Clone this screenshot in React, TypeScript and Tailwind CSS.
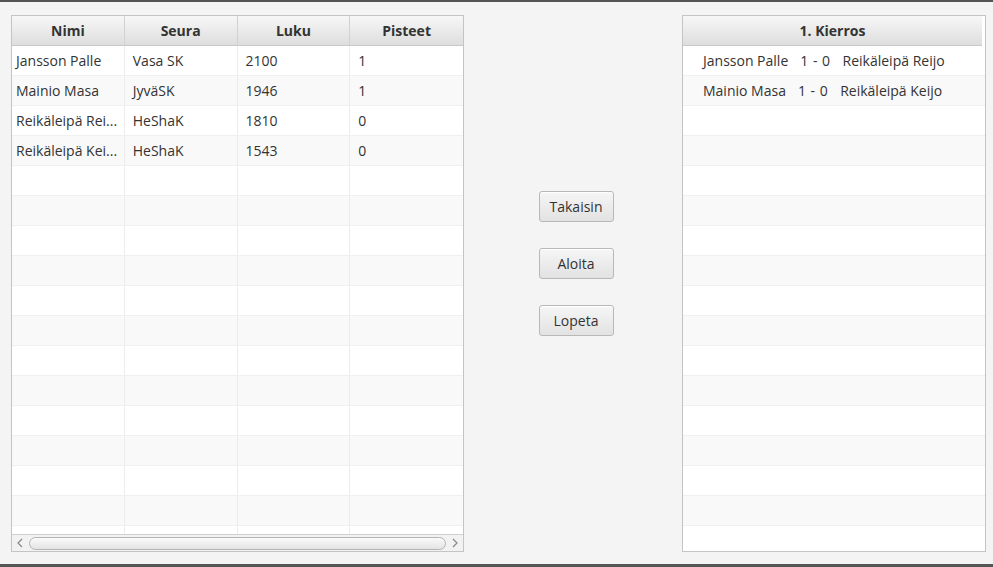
import React from "react";

const players = [
  ["Jansson Palle", "Vasa SK", "2100", "1"],
  ["Mainio Masa", "JyväSK", "1946", "1"],
  ["Reikäleipä Rei...", "HeShaK", "1810", "0"],
  ["Reikäleipä Kei...", "HeShaK", "1543", "0"],
];

const pairings = [
  ["Jansson Palle", "1 - 0", "Reikäleipä Reijo"],
  ["Mainio Masa", "1 - 0", "Reikäleipä Keijo"],
];

const headers = ["Nimi", "Seura", "Luku", "Pisteet"];

const font = { fontFamily: '"Open Sans", "Noto Sans", sans-serif' };

function HeaderCell({ label, last }: { label: string; last?: boolean }) {
  return (
    <div
      className={`flex h-[30px] items-center justify-center border-b border-[#c8c8c8] bg-gradient-to-b from-[#f7f7f7] to-[#dedede] text-[14px] font-bold text-[#333] ${
        last ? "" : "border-r border-r-[#d2d2d2]"
      }`}
    >
      {label}
    </div>
  );
}

function Button({ label }: { label: string }) {
  return (
    <button className="h-[31px] w-[75px] rounded-[3px] border border-[#b8b8b8] bg-gradient-to-b from-[#f6f6f6] to-[#e2e2e2] text-[14px] text-[#333] shadow-[inset_0_1px_0_#fff]">
      {label}
    </button>
  );
}

export default function App() {
  const rows = Array.from({ length: 17 });

  return (
    <div
      className="flex h-[567px] w-[993px] flex-col overflow-hidden border-t-2 border-b-[3px] border-[#555] bg-[#f4f4f4]"
      style={font}
    >
      <div className="flex pl-[11px] pt-[13px]">
        {/* players table */}
        <div className="flex h-[537px] w-[453px] flex-col border border-[#c4c4c4] bg-white">
          <div className="grid grid-cols-4">
            {headers.map((h, i) => (
              <HeaderCell key={h} label={h} last={i === 3} />
            ))}
          </div>
          <div className="flex-1 overflow-hidden">
            {rows.map((_, r) => {
              const p = players[r];
              return (
                <div
                  key={r}
                  className={`grid h-[30px] grid-cols-4 border-b border-[#f0f0f0] ${
                    r % 2 ? "bg-[#f9f9f9]" : "bg-white"
                  }`}
                >
                  {[0, 1, 2, 3].map((c) => (
                    <div
                      key={c}
                      className={`flex items-center truncate text-[14px] text-[#333] ${
                        c === 0 ? "pl-[4px]" : "pl-[8px]"
                      } ${c < 3 ? "border-r border-[#ececec]" : ""}`}
                    >
                      {p ? p[c] : ""}
                    </div>
                  ))}
                </div>
              );
            })}
          </div>
          <div className="flex h-[17px] items-center border-t border-[#d0d0d0] bg-[#f2f2f2] px-[3px] text-[#888]">
            <svg width="8" height="10" viewBox="0 0 8 10" className="ml-[1px]">
              <path d="M6 1 L2 5 L6 9" fill="none" stroke="#888" strokeWidth="1.2" />
            </svg>
            <div className="mx-[5px] h-[13px] flex-1 rounded-full border border-[#b4b4b4] bg-gradient-to-b from-[#fafafa] to-[#e4e4e4]" />
            <svg width="8" height="10" viewBox="0 0 8 10" className="mr-[1px]">
              <path d="M2 1 L6 5 L2 9" fill="none" stroke="#888" strokeWidth="1.2" />
            </svg>
          </div>
        </div>

        {/* buttons */}
        <div className="flex w-[218px] flex-col items-center gap-[26px] pl-[6px] pt-[176px]">
          <Button label="Takaisin" />
          <Button label="Aloita" />
          <Button label="Lopeta" />
        </div>

        {/* round table */}
        <div className="flex h-[537px] w-[304px] flex-col border border-[#c4c4c4] bg-white">
          <div className="pr-[3px]">
            <HeaderCell label="1. Kierros" last />
          </div>
          <div className="flex-1 overflow-hidden">
            {rows.map((_, r) => {
              const p = pairings[r];
              return (
                <div
                  key={r}
                  className={`flex h-[30px] items-center gap-[12px] whitespace-pre border-b border-[#f0f0f0] pl-[20px] text-[14px] text-[#333] ${
                    r % 2 ? "bg-[#f9f9f9]" : "bg-white"
                  }`}
                >
                  {p && (
                    <>
                      <span>{p[0]}</span>
                      <span className="tracking-[0.5px]">{p[1]}</span>
                      <span>{p[2]}</span>
                    </>
                  )}
                </div>
              );
            })}
          </div>
        </div>
      </div>
    </div>
  );
}
